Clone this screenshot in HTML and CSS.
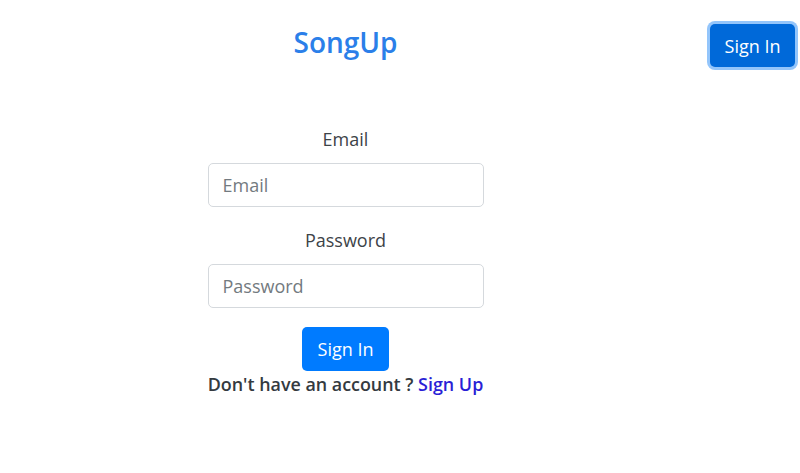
FILE: index.html
```html
<!DOCTYPE html>
<html lang="en">
<head>
<meta charset="utf-8">
<title>SongUp</title>
<link rel="stylesheet" href="styles.css">
</head>
<body>
<div class="page">
  <div class="main">
    <h1 class="brand">SongUp</h1>
    <form class="login">
      <div class="group">
        <label class="label" for="email">Email</label>
        <input class="field" id="email" type="email" placeholder="Email">
      </div>
      <div class="group">
        <label class="label" for="password">Password</label>
        <input class="field" id="password" type="password" placeholder="Password">
      </div>
      <div class="actions">
        <button class="btn btn-primary" type="button">Sign In</button>
      </div>
      <p class="signup">Don't have an account ? <a class="signup-link" href="#">Sign Up</a></p>
    </form>
  </div>
  <div class="side">
    <button class="btn btn-nav" type="button">Sign In</button>
  </div>
</div>
</body>
</html>
```
FILE: styles.css
```css
* { box-sizing: border-box; }
html, body { margin: 0; padding: 0; background: #fff; }
body {
  font-family: "Open Sans", "Noto Sans", sans-serif;
  color: #343a40;
  font-size: 18px;
}
.page {
  display: flex;
  align-items: flex-start;
}
.main {
  width: 691px;
  display: flex;
  flex-direction: column;
  align-items: center;
  padding-top: 24px;
}
.brand {
  margin: 0;
  font-size: 28px;
  line-height: 36px;
  font-weight: 600;
  color: #2b7fe9;
}
.login {
  width: 276px;
  margin-top: 65px;
}
.group {
  margin-bottom: 19px;
}
.label {
  display: block;
  text-align: center;
  line-height: 29px;
  margin-bottom: 9px;
  color: #3d4348;
}
.field {
  display: block;
  width: 100%;
  height: 44px;
  border: 1px solid #d5d9dd;
  border-radius: 5px;
  padding: 0 14px;
  font-family: inherit;
  font-size: 18px;
  color: #495057;
  background: #fff;
  outline: none;
}
.field::placeholder { color: #737a80; }
.actions {
  display: flex;
  justify-content: center;
}
.btn {
  font-family: inherit;
  font-size: 18px;
  border: none;
  color: #fff;
  border-radius: 5px;
  cursor: pointer;
}
.btn-primary {
  width: 87px;
  height: 44px;
  background: #007bff;
}
.signup {
  margin: 0;
  text-align: center;
  line-height: 26px;
  font-weight: 600;
  font-size: 17.9px;
  color: #343a40;
  white-space: nowrap;
}
.signup-link {
  color: #2a1fd6;
  text-decoration: none;
}
.side {
  padding-top: 24px;
  padding-left: 19px;
}
.btn-nav {
  width: 85px;
  height: 43px;
  background: #0069d9;
  box-shadow: 0 0 0 3px #93c5fb;
}
```
